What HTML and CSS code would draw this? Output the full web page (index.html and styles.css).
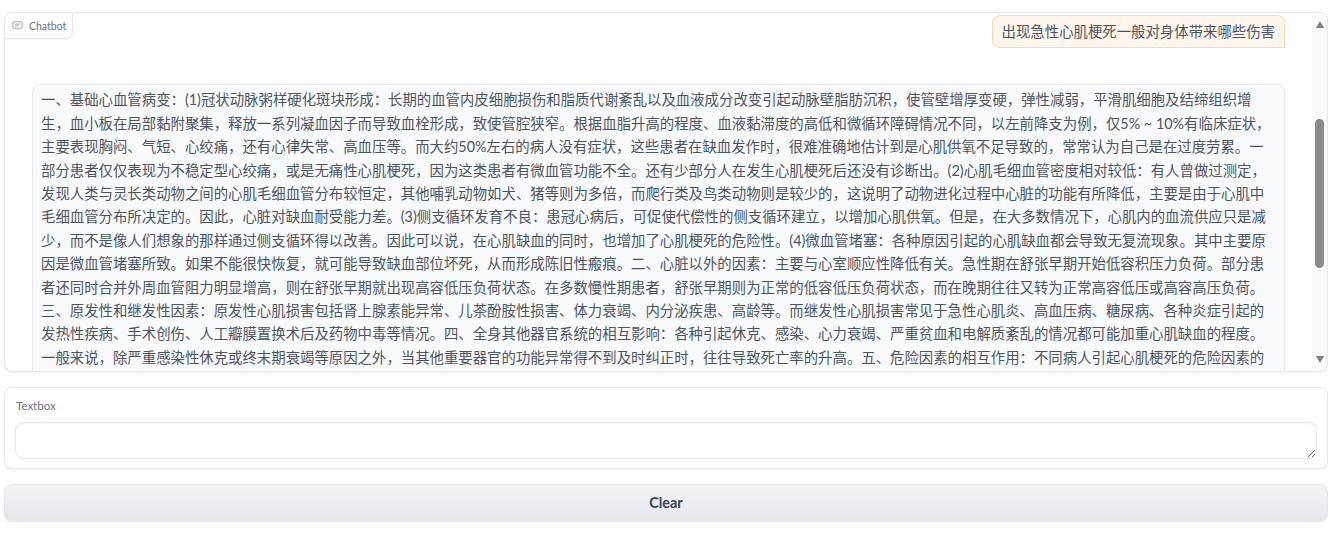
FILE: index.html
```html
<!DOCTYPE html>
<html lang="zh-CN">
<head>
    <meta charset="UTF-8">
    <meta name="viewport" content="width=device-width, initial-scale=1.0">
    <title>Chatbot</title>
    <link rel="stylesheet" href="styles.css">
</head>

<body>

    <div class="page">

        <!-- Chatbot -->
        <div class="panel chatbot">
            <div class="chat-label">
                <svg class="chat-icon" width="11" height="11" viewBox="0 0 24 24" fill="none" stroke="currentColor" stroke-width="2">
                    <path d="M3 4h18a1 1 0 0 1 1 1v12a1 1 0 0 1-1 1h-5l-4 3-1-3H3a1 1 0 0 1-1-1V5a1 1 0 0 1 1-1z"/>
                    <path d="M6 9h12M6 13h9"/>
                </svg>
                Chatbot
            </div>
            <div class="messages">
                <div class="message user">出现急性心肌梗死一般对身体带来哪些伤害</div>
                <div class="message bot">一、基础心血管病变：(1)冠状动脉粥样硬化斑块形成：长期的血管内皮细胞损伤和脂质代谢紊乱以及血液成分改变引起动脉壁脂肪沉积，使管壁增厚变硬，弹性减弱，平滑肌细胞及结缔组织增生，血小板在局部黏附聚集，释放一系列凝血因子而导致血栓形成，致使管腔狭窄。根据血脂升高的程度、血液黏滞度的高低和微循环障碍情况不同，以左前降支为例，仅5% ~ 10%有临床症状，主要表现胸闷、气短、心绞痛，还有心律失常、高血压等。而大约50%左右的病人没有症状，这些患者在缺血发作时，很难准确地估计到是心肌供氧不足导致的，常常认为自己是在过度劳累。一部分患者仅仅表现为不稳定型心绞痛，或是无痛性心肌梗死，因为这类患者有微血管功能不全。还有少部分人在发生心肌梗死后还没有诊断出。(2)心肌毛细血管密度相对较低：有人曾做过测定，发现人类与灵长类动物之间的心肌毛细血管分布较恒定，其他哺乳动物如犬、猪等则为多倍，而爬行类及鸟类动物则是较少的，这说明了动物进化过程中心脏的功能有所降低，主要是由于心肌中毛细血管分布所决定的。因此，心脏对缺血耐受能力差。(3)侧支循环发育不良：患冠心病后，可促使代偿性的侧支循环建立，以增加心肌供氧。但是，在大多数情况下，心肌内的血流供应只是减少，而不是像人们想象的那样通过侧支循环得以改善。因此可以说，在心肌缺血的同时，也增加了心肌梗死的危险性。(4)微血管堵塞：各种原因引起的心肌缺血都会导致无复流现象。其中主要原因是微血管堵塞所致。如果不能很快恢复，就可能导致缺血部位坏死，从而形成陈旧性瘢痕。二、心脏以外的因素：主要与心室顺应性降低有关。急性期在舒张早期开始低容积压力负荷。部分患者还同时合并外周血管阻力明显增高，则在舒张早期就出现高容低压负荷状态。在多数慢性期患者，舒张早期则为正常的低容低压负荷状态，而在晚期往往又转为正常高容低压或高容高压负荷。三、原发性和继发性因素：原发性心肌损害包括肾上腺素能异常、儿茶酚胺性损害、体力衰竭、内分泌疾患、高龄等。而继发性心肌损害常见于急性心肌炎、高血压病、糖尿病、各种炎症引起的发热性疾病、手术创伤、人工瓣膜置换术后及药物中毒等情况。四、全身其他器官系统的相互影响：各种引起休克、感染、心力衰竭、严重贫血和电解质紊乱的情况都可能加重心肌缺血的程度。一般来说，除严重感染性休克或终末期衰竭等原因之外，当其他重要器官的功能异常得不到及时纠正时，往往导致死亡率的升高。五、危险因素的相互作用：不同病人引起心肌梗死的危险因素的</div>
            </div>
            <div class="scrollbar">
                <span class="arrow-up"></span>
                <span class="thumb"></span>
                <span class="arrow-down"></span>
            </div>
        </div>

        <!-- Textbox -->
        <div class="panel textbox">
            <label class="field-label" for="input">Textbox</label>
            <textarea id="input" class="field-input"></textarea>
        </div>

        <!-- Buttons -->
        <button class="clear-button">Clear</button>
    </div>

</body>

</html>
```

FILE: styles.css
```css
/* General Styles */
body {
    font-family: "Lato", "Noto Sans CJK SC", sans-serif;
    color: #4b5563;
    background-color: #fff;
    margin: 0;
    padding: 0;
}

.page {
    display: flex;
    flex-direction: column;
    gap: 15px;
    padding: 12px 15px 0 4px;
}

.panel {
    background-color: #fff;
    border: 1px solid #e5e7eb;
    border-radius: 8px;
    box-shadow: 0 1px 2px rgba(0, 0, 0, 0.05);
}

/* Chatbot */
.chatbot {
    display: flex;
    position: relative;
    height: 360px;
    box-sizing: border-box;
    overflow: hidden;
}

.chat-label {
    position: absolute;
    top: -1px;
    left: -1px;
    display: flex;
    align-items: center;
    gap: 6px;
    height: 25px;
    padding: 0 6px 0 7px;
    font-size: 10.5px;
    color: #6b7280;
    background-color: #fff;
    border: 1px solid #e5e7eb;
    border-radius: 0 0 8px 0;
    box-shadow: 0 1px 2px rgba(0, 0, 0, 0.05);
}

.chat-icon {
    color: #9ca3af;
}

.messages {
    flex: 1;
    display: flex;
    flex-direction: column;
    align-items: flex-end;
    gap: 36px;
    padding: 2px 27px 0;
    overflow: hidden;
    font-size: 14.4px;
    line-height: 23.4px;
}

.message {
    box-sizing: border-box;
    border: 1px solid;
    border-radius: 8px;
}

.user {
    padding: 4px 9px;
    background-color: #fff7ed;
    border-color: #fed7aa;
    border-bottom-right-radius: 0;
}

.bot {
    width: 100%;
    padding: 3px 8px 12px;
    background-color: #f9fafb;
    border-color: #e5e7eb;
    border-bottom-left-radius: 0;
    flex-shrink: 0;
}

/* Scrollbar */
.scrollbar {
    width: 15px;
    display: flex;
    flex-direction: column;
    align-items: center;
    background-color: #fafafa;
}

.arrow-up {
    margin-top: 8px;
    border-left: 4.5px solid transparent;
    border-right: 4.5px solid transparent;
    border-bottom: 7px solid #808080;
}

.thumb {
    width: 9px;
    height: 149px;
    margin-top: 91px;
    background-color: #8b8b8b;
    border-radius: 5px;
}

.arrow-down {
    margin-top: auto;
    margin-bottom: 8px;
    border-left: 4.5px solid transparent;
    border-right: 4.5px solid transparent;
    border-top: 7px solid #808080;
}

/* Textbox */
.textbox {
    display: flex;
    flex-direction: column;
    gap: 8px;
    padding: 10px 10px 9px;
}

.field-label {
    margin-left: 1px;
    font-size: 11.5px;
    line-height: 16px;
    color: #6b7280;
}

.field-input {
    display: block;
    height: 37px;
    box-sizing: border-box;
    padding: 6px 10px;
    font-family: inherit;
    font-size: 14.4px;
    color: #374151;
    border: 1px solid #e5e7eb;
    border-radius: 8px;
    box-shadow: inset 0 1px 2px rgba(0, 0, 0, 0.05);
    outline: none;
    resize: vertical;
}

.clear-button {
    height: 38px;
    margin-top: 0;
    padding-bottom: 3px;
    font-family: inherit;
    font-size: 14.4px;
    font-weight: 700;
    color: #374151;
    background: linear-gradient(to bottom, #f3f4f6, #e5e7eb);
    border: 1px solid #e5e7eb;
    border-radius: 8px;
    box-shadow: 0 1px 2px rgba(0, 0, 0, 0.05);
    cursor: pointer;
}
```
